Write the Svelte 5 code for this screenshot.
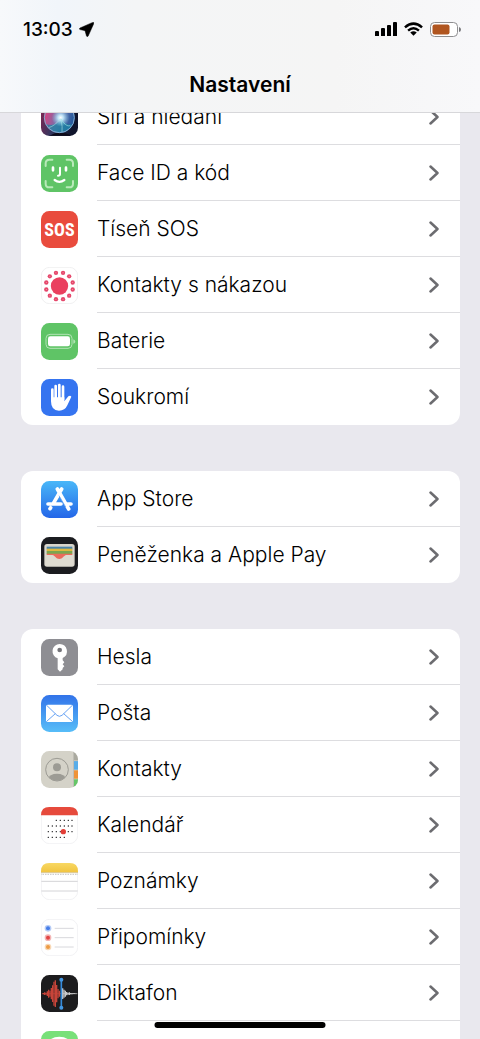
<script>
  const groups = [
    [
      { icon: 'siri', label: 'Siri a hledání' },
      { icon: 'face', label: 'Face ID a kód' },
      { icon: 'sos', label: 'Tíseň SOS' },
      { icon: 'exposure', label: 'Kontakty s nákazou' },
      { icon: 'battery', label: 'Baterie' },
      { icon: 'privacy', label: 'Soukromí' }
    ],
    [
      { icon: 'store', label: 'App Store' },
      { icon: 'wallet', label: 'Peněženka a Apple Pay' }
    ],
    [
      { icon: 'passwords', label: 'Hesla' },
      { icon: 'mail', label: 'Pošta' },
      { icon: 'contacts', label: 'Kontakty' },
      { icon: 'calendar', label: 'Kalendář' },
      { icon: 'notes', label: 'Poznámky' },
      { icon: 'reminders', label: 'Připomínky' },
      { icon: 'voice', label: 'Diktafon' },
      { icon: 'messages', label: '' }
    ]
  ];

  const dots = Array.from({ length: 12 }, (_, i) => {
    const a = ((i * 30 + 15) * Math.PI) / 180;
    return { x: 55.5 + 41 * Math.cos(a), y: 57 + 41 * Math.sin(a) };
  });

  const days = [
    [44, 56, 68, 80, 91],
    [20, 32, 44, 56, 68, 80, 91],
    [20, 32, 44, 56, 68, 80, 91],
    [20, 32, 44, 56, 68]
  ];

  const wave = [
    [7, 2], [11, 4], [15, 3], [19, 7], [23, 12], [27, 9], [31, 17], [35, 25], [39, 36], [43, 40], [47, 26], [51, 14], [55, 9]
  ];
  const waveRight = [
    [65, 16], [69, 12], [73, 9], [77, 5], [81, 3], [85, 4], [89, 2], [93, 2], [97, 1], [101, 1]
  ];
</script>

{#snippet glyph(name)}
  <svg class="icon" viewBox="0 0 111 111" aria-hidden="true">
    {#if name === 'siri'}
      <defs>
        <linearGradient id="siri-bg" x1="0" y1="0" x2="1" y2="0.3">
          <stop offset="0" stop-color="#8d234f" /><stop offset=".5" stop-color="#32375f" /><stop offset="1" stop-color="#10152c" />
        </linearGradient>
        <linearGradient id="siri-orb" x1="0" y1="0.2" x2="1" y2="0.5">
          <stop offset="0" stop-color="#e93b78" /><stop offset=".5" stop-color="#756fab" /><stop offset="1" stop-color="#235b9d" />
        </linearGradient>
        <radialGradient id="siri-glow">
          <stop offset="0" stop-color="#fff" /><stop offset=".3" stop-color="#c9efff" stop-opacity=".9" /><stop offset="1" stop-color="#7ecbe7" stop-opacity="0" />
        </radialGradient>
      </defs>
      <rect width="111" height="111" rx="25" fill="url(#siri-bg)" />
      <path d="M25 110Q57 92 90 109Q80 111 25 110Z" fill="#0d0a18" />
      <circle cx="55" cy="56" r="46" fill="url(#siri-orb)" />
      <path d="M13 75Q45 85 61 60Q77 82 94 75Q84 101 56 102Q27 100 13 75Z" fill="#1786a2" opacity=".7" />
      <circle cx="59" cy="56" r="27" fill="url(#siri-glow)" />
      <path d="M59 59Q39 83 22 86M60 60Q75 85 88 80M60 60Q65 85 63 99" fill="none" stroke="#a6e2e5" stroke-width="3" opacity=".6" />
      <circle cx="55" cy="56" r="45" fill="none" stroke="#83a9ce" stroke-width="3" />
    {:else if name === 'face'}
      <rect width="111" height="111" rx="25" fill="#5fc466" />
      <g fill="none" stroke="#b9e9b9" stroke-width="6" stroke-linecap="round">
        <path d="M14 33V25Q14 14 25 14H34M77 14H85Q96 14 96 25V33M96 78V86Q96 97 85 97H77M34 97H25Q14 97 14 86V78" />
      </g>
      <g fill="none" stroke="#fff" stroke-width="7" stroke-linecap="round">
        <path d="M36 38V46M75 38V46" stroke-width="8" /><path d="M57 38V57Q57 62 51 62" stroke-width="6" /><path d="M41 75Q55 86 70 75" />
      </g>
    {:else if name === 'sos'}
      <rect width="111" height="111" rx="25" fill="#e94b3d" />
      <text class="sos" x="55.5" y="75" text-anchor="middle" fill="#fff">SOS</text>
    {:else if name === 'exposure'}
      <rect x="1" y="1" width="109" height="109" rx="25" fill="#fff" stroke="#e8e8ea" stroke-width="2" />
      <circle cx="55.5" cy="57" r="26" fill="#ea405f" />
      {#each dots as d}<circle cx={d.x} cy={d.y} r="6.5" fill="#e5476b" /><circle cx={d.x} cy={d.y} r="1.5" fill="#f6a3b4" />{/each}
    {:else if name === 'battery'}
      <rect width="111" height="111" rx="25" fill="#5fc466" />
      <rect x="15" y="34" width="78" height="42" rx="12" fill="none" stroke="#b2e3b5" stroke-width="3" />
      <rect x="21" y="40" width="66" height="30" rx="7" fill="#fff" />
      <path d="M97 49Q103 52 103 56Q103 60 97 62Z" fill="#b2e3b5" />
    {:else if name === 'privacy'}
      <rect width="111" height="111" rx="25" fill="#3574f0" />
      <g fill="none" stroke="#fff" stroke-width="8" stroke-linecap="round" stroke-linejoin="round">
        <path d="M34 32V62M44 21V60M55 18V60M66 23V62" />
      </g>
      <path d="M30 55H70V67L82 52Q88 48 91 53L79 79Q72 95 54 95Q30 95 30 67Z" fill="#fff" />
    {:else if name === 'store'}
      <defs><linearGradient id="store-bg" x1="0" y1="0" x2="0" y2="1"><stop stop-color="#49b7f8" /><stop offset="1" stop-color="#2466e8" /></linearGradient></defs>
      <rect width="111" height="111" rx="25" fill="url(#store-bg)" />
      <g fill="none" stroke="#fff" stroke-width="11" stroke-linecap="round">
        <path d="M49 24L83 84M62 24L37 67M29 80L27 83M21 69H60M79 69H90" />
      </g>
      <path d="M54 44L74 78" stroke="#3b8df2" stroke-width="2" />
    {:else if name === 'wallet'}
      <rect width="111" height="111" rx="25" fill="#1b1c20" />
      <rect x="10" y="21" width="91" height="68" rx="8" fill="#d9d6cc" />
      <path d="M17 29H94V37H17Z" fill="#4a84a9" /><path d="M17 35H94V43H17Z" fill="#deb83f" /><path d="M17 42H94V51H17Z" fill="#7ba64f" />
      <path d="M14 51H97V84Q97 86 94 86H17Q14 86 14 84Z" fill="#dedbd1" />
      <path d="M17 50H94V54H76C67 56 65 66 55 66S43 56 34 54H17Z" fill="#eb6b5c" />
    {:else if name === 'passwords'}
      <rect width="111" height="111" rx="25" fill="#8e8e93" />
      <path fill-rule="evenodd" d="M56 15A22 22 0 0 1 65 57V64L70 70L65 76L70 82L65 87V91L57 98L50 91V58A22 22 0 0 1 56 15M56 26A7 7 0 1 0 56 40A7 7 0 1 0 56 26" fill="#fff" />
      <circle cx="56" cy="33" r="6" fill="#737378" />
    {:else if name === 'mail'}
      <defs><linearGradient id="mail-bg" x1="0" y1="0" x2="0" y2="1"><stop stop-color="#3273e9" /><stop offset="1" stop-color="#57bdf8" /></linearGradient></defs>
      <rect width="111" height="111" rx="25" fill="url(#mail-bg)" />
      <rect x="15" y="29" width="81" height="52" rx="5" fill="#fff" />
      <path d="M17 31L48 61Q55 67 63 61L94 31M17 79L43 56M94 79L68 56" fill="none" stroke="#488ff0" stroke-width="2.5" />
    {:else if name === 'contacts'}
      <clipPath id="contacts-clip"><rect width="111" height="111" rx="25" /></clipPath>
      <clipPath id="avatar-clip"><circle cx="48" cy="56" r="33" /></clipPath>
      <g clip-path="url(#contacts-clip)">
        <rect width="111" height="111" fill="#d4d2c8" />
        <path d="M98 0H111V30H98Z" fill="#aaa99f" /><path d="M98 30H111V57H98Z" fill="#58ade9" /><path d="M98 57H111V84H98Z" fill="#ef9438" /><path d="M98 84H111V111H98Z" fill="#65c668" />
        <path d="M96 0H99V111H96Z" fill="#bebdb5" /><path d="M99 29H111M99 57H111M99 84H111" stroke="#d5d3c9" stroke-width="2" />
      </g>
      <circle cx="48" cy="49" r="12" fill="#9c9b94" />
      <ellipse cx="48" cy="83" rx="26" ry="15" fill="#9c9b94" clip-path="url(#avatar-clip)" />
      <circle cx="48" cy="56" r="34" fill="none" stroke="#9c9b94" stroke-width="3" />
    {:else if name === 'calendar'}
      <rect x="1" y="1" width="109" height="109" rx="25" fill="#fff" stroke="#ececef" stroke-width="2" />
      <path d="M0 25Q0 0 25 0H86Q111 0 111 25Z" fill="#e64a3c" />
      {#each days as row, r}{#each row as x}<rect x={x} y={38 + r * 17} width="4" height="4" rx="1" fill="#3c3c3e" />{/each}{/each}
      <circle cx="67" cy="74" r="8" fill="#e33e37" />
    {:else if name === 'notes'}
      <defs><linearGradient id="notes-bg" x1="0" y1="0" x2="0" y2="1"><stop stop-color="#f8d863" /><stop offset="1" stop-color="#f1c440" /></linearGradient></defs>
      <rect x="1" y="1" width="109" height="109" rx="25" fill="#fff" stroke="#ececef" stroke-width="2" />
      <path d="M0 28V25Q0 0 25 0H86Q111 0 111 25V28Z" fill="url(#notes-bg)" />
      <path d="M0 29H111" stroke="#c8ad65" stroke-width="2" />
      <path d="M2 34H110" stroke="#a8a8a8" stroke-width="3" stroke-dasharray="2 3" />
      <path d="M1 55H110M1 84H110" stroke="#d4d4d7" stroke-width="3" />
    {:else if name === 'reminders'}
      <rect x="1" y="1" width="109" height="109" rx="25" fill="#fff" stroke="#ececef" stroke-width="2" />
      {#each ['#467de8', '#e24444', '#ed9a43'] as color, i}
        <circle cx="21" cy={28 + i * 28} r="10" fill={color} opacity=".4" /><circle cx="21" cy={28 + i * 28} r="6" fill={color} />
        <path d="M41 {28 + i * 28}H98" stroke="#d8d8dc" stroke-width="3" />
      {/each}
    {:else if name === 'voice'}
      <rect width="111" height="111" rx="25" fill="#1c1c1e" />
      <path d="M3 56H61" stroke="#c84439" stroke-width="2" /><path d="M61 56H109" stroke="#ddd" stroke-width="2" />
      <g stroke="#c84439" stroke-width="4">{#each wave as [x, h]}<path d="M{x} {56 - h}V{56 + h}" />{/each}</g>
      <g stroke="#c9c9cb" stroke-width="4">{#each waveRight as [x, h]}<path d="M{x} {56 - h}V{56 + h}" />{/each}</g>
      <path d="M61 14V98" stroke="#358bdc" stroke-width="5" /><circle cx="61" cy="14" r="6" fill="#4398e5" /><circle cx="61" cy="98" r="6" fill="#4398e5" />
    {:else}
      <rect width="111" height="111" rx="25" fill="#78e079" />
      <ellipse cx="55" cy="51" rx="41" ry="34" fill="#fff" />
    {/if}
  </svg>
{/snippet}

<div class="screen">
  <header>
    <div class="status">
      <div class="clock">
        <time>13:03</time>
        <svg class="location" viewBox="0 0 16 16" aria-hidden="true"><path d="M14.6.4L1 6.4Q-.2 7.6 1.2 8.1L6.4 9.2L8 15Q8.8 16.2 9.8 15L15.8 1.6Q16 0 14.6.4Z" stroke="#000" stroke-width=".5" /></svg>
      </div>
      <div class="signals">
        <svg class="cell" viewBox="0 0 22 14" aria-hidden="true"><path d="M0 10Q0 9 1 9H3Q4 9 4 10V14H0ZM6 7Q6 6 7 6H9Q10 6 10 7V14H6ZM12 4Q12 3 13 3H15Q16 3 16 4V14H12ZM18 1Q18 0 19 0H21Q22 0 22 1V14H18Z" /></svg>
        <svg class="wifi" viewBox="0 0 20 14" aria-hidden="true"><g fill="none" stroke="#000" stroke-width="2.6"><path d="M1 5.3Q10-2.6 19 5.3" /><path d="M4.3 8.7Q10 3.7 15.7 8.7" /></g><path d="M6.6 10.7Q10 8 13.4 10.7L10 14Z" /></svg>
        <svg class="charge" viewBox="0 0 31 15" aria-hidden="true"><rect x=".5" y=".5" width="27" height="14" rx="4" fill="#fff" stroke="#8e8e90" /><rect x="2.5" y="2.5" width="17" height="10" rx="2" fill="#b0551f" /><path d="M29 5Q31 5.5 31 7.5T29 10Z" fill="#77777a" /></svg>
      </div>
    </div>
    <h1>Nastavení</h1>
  </header>

  <main>
    {#each groups as group}
      <ul>
        {#each group as item}
          <li>
            <a href="#{item.icon}">
              {@render glyph(item.icon)}
              <span class="label">
                <span>{item.label}</span>
                <svg class="chevron" viewBox="0 0 10 16" aria-hidden="true"><path d="M1.5 1.5L8.5 8L1.5 14.5" /></svg>
              </span>
            </a>
          </li>
        {/each}
      </ul>
    {/each}
  </main>
  <div class="home"></div>
</div>

<style>
  :global(body) {
    background: #e9e8ee;
  }
  .screen {
    height: 100vh;
    overflow: hidden;
    background: #e9e8ee;
    color: #000;
    font-family: Inter, "Liberation Sans", sans-serif;
  }
  header {
    position: relative;
    z-index: 1;
    box-sizing: border-box;
    height: 113px;
    padding-top: 17px;
    border-bottom: 1px solid #d7d7da;
    background: linear-gradient(90deg, #f7f9fb 0%, #f1f5fa 12%, #f4f5f6 28%, #f5f5f5 70%, #f8f8fa 100%);
  }
  .status,
  .clock,
  .signals {
    display: flex;
    align-items: center;
  }
  .status {
    justify-content: space-between;
    height: 24px;
    padding: 0 19px 0 23px;
  }
  .clock {
    gap: 6px;
    font-size: 19px;
    font-weight: 500;
  }
  .signals {
    gap: 7px;
  }
  .location {
    width: 15px;
    height: 15px;
  }
  .cell {
    width: 22px;
    height: 14px;
  }
  .wifi {
    width: 19px;
    height: 14px;
  }
  .charge {
    width: 31px;
    height: 15px;
  }
  h1 {
    margin: 30px 0 0;
    font-size: 21px;
    font-weight: 600;
    line-height: 28px;
    text-align: center;
  }
  main {
    display: flex;
    flex-direction: column;
    gap: 46px;
    margin: -24px 20px 0 21px;
  }
  ul {
    margin: 0;
    padding: 0;
    border-radius: 12px;
    background: #fff;
    list-style: none;
  }
  a {
    display: flex;
    align-items: center;
    gap: 19px;
    height: 56px;
    padding-left: 20px;
    color: inherit;
    text-decoration: none;
  }
  .icon {
    flex: none;
    width: 37px;
    height: 37px;
  }
  .label {
    display: flex;
    flex: 1;
    align-items: center;
    justify-content: space-between;
    box-sizing: border-box;
    height: 56px;
    padding-right: 21px;
    border-bottom: 1px solid #dddde0;
    font-size: 21px;
    font-weight: 350;
    line-height: 28px;
  }
  li:last-child .label {
    border-bottom-color: transparent;
  }
  .chevron {
    width: 10px;
    height: 16px;
    fill: none;
    stroke: #6c6c70;
    stroke-width: 2.5;
    stroke-linecap: round;
    stroke-linejoin: round;
  }
  .sos {
    font: 700 54px "Liberation Sans Narrow", "Roboto Condensed", Roboto, sans-serif;
  }
  .home {
    position: fixed;
    bottom: 11px;
    left: 50%;
    width: 171px;
    height: 6px;
    border-radius: 3px;
    background: #000;
    transform: translateX(-50%);
  }
</style>
